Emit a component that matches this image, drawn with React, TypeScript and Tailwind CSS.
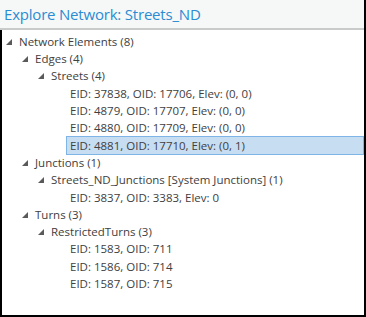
import React from "react";

type Node = { label: string; level: number; expander?: boolean; selected?: boolean };

const rows: Node[] = [
  { label: "Network Elements (8)", level: 0, expander: true },
  { label: "Edges (4)", level: 1, expander: true },
  { label: "Streets (4)", level: 2, expander: true },
  { label: "EID: 37838, OID: 17706, Elev: (0, 0)", level: 3 },
  { label: "EID: 4879, OID: 17707, Elev: (0, 0)", level: 3 },
  { label: "EID: 4880, OID: 17709, Elev: (0, 0)", level: 3 },
  { label: "EID: 4881, OID: 17710, Elev: (0, 1)", level: 3, selected: true },
  { label: "Junctions (1)", level: 1, expander: true },
  { label: "Streets_ND_Junctions [System Junctions] (1)", level: 2, expander: true },
  { label: "EID: 3837, OID: 3383, Elev: 0", level: 3 },
  { label: "Turns (3)", level: 1, expander: true },
  { label: "RestrictedTurns (3)", level: 2, expander: true },
  { label: "EID: 1583, OID: 711", level: 3 },
  { label: "EID: 1586, OID: 714", level: 3 },
  { label: "EID: 1587, OID: 715", level: 3 },
];

const indents = ["pl-[4px]", "pl-[20px]", "pl-[36px]", "pl-[64px]"];

function Tri() {
  return (
    <svg width="6" height="6" viewBox="0 0 6 6" className="shrink-0">
      <polygon points="6,0 6,6 0,6" fill="#5a5a5a" />
    </svg>
  );
}

export default function App() {
  return (
    <div
      className="w-[366px] h-[317px] bg-white flex flex-col border-r-2 border-black overflow-hidden"
      style={{ fontFamily: '"Open Sans", "Noto Sans", sans-serif' }}
    >
      <div className="h-[30px] shrink-0 bg-[#f6f8f8] border-b-2 border-[#c9cbcb] flex items-center pl-[4px]">
        <span className="text-[15px] text-[#2a8cd3] leading-none tracking-[-0.2px]">
          Explore Network: Streets_ND
        </span>
      </div>
      <div className="flex-1 border-l-2 border-b-2 border-black pt-[3px] flex flex-col">
        {rows.map((r, i) => (
          <div key={i} className={`h-[17.3px] shrink-0 flex items-center ${indents[r.level]}`}>
            {r.expander ? (
              <div className="flex items-center">
                <Tri />
                <span className="ml-[7px] text-[11.5px] text-[#404040] leading-none whitespace-nowrap">
                  {r.label}
                </span>
              </div>
            ) : (
              <div
                className={`flex items-center h-[19px] flex-1 pl-[3px] border ${
                  r.selected ? "bg-[#c7ddf2] border-[#7fb4e6]" : "border-transparent"
                }`}
              >
                <span className="text-[11.5px] text-[#404040] leading-none whitespace-nowrap">
                  {r.label}
                </span>
              </div>
            )}
          </div>
        ))}
      </div>
    </div>
  );
}
